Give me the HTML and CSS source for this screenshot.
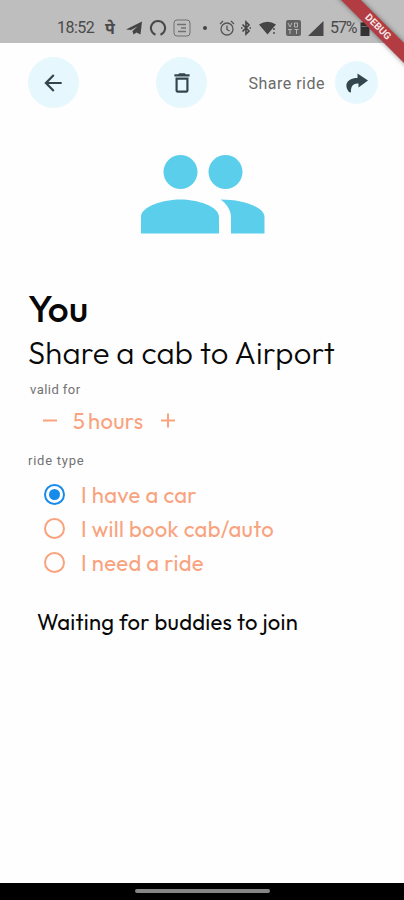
FILE: index.html
```html
<!DOCTYPE html>
<html lang="en">
<head>
<meta charset="utf-8">
<title>Share ride</title>
<link rel="stylesheet" href="styles.css">
</head>
<body>
<div class="phone">
  <header class="status">
    <span class="clock">18:52</span>
    <span class="pay">पे</span>
    <svg class="telegram" width="17" height="16" viewBox="0 0 17 16"><path d="M0 9.500 16 1.500 14.500 14.500 10.500 12.500 7.500 14.500 6.500 11 11.500 6.500 5 10z" fill="#444"/></svg>
    <svg class="ring" width="18" height="18" viewBox="0 0 18 18"><path d="M6.500 15.700A7.100 7.100 0 1 1 11.500 15.700" fill="none" stroke="#484848" stroke-width="2"/></svg>
    <svg class="note" width="18" height="18" viewBox="0 0 18 18" fill="none" stroke="#707070"><rect x="1" y="1" width="16" height="16" rx="3"/><path d="M4 5.500h3M7 5.500h6M8 9h5M5 12.500h8" stroke-width="1.300"/></svg>
    <span class="dot"></span>
    <svg class="alarm" width="16" height="17" viewBox="0 0 16 17" fill="none" stroke="#555" stroke-width="1.300"><circle cx="8" cy="9" r="6"/><path d="M1 4 4 1M15 4 12 1M8 5.500V9.500l2.500 1.500"/></svg>
    <svg class="bluetooth" width="10" height="16" viewBox="0 0 10 16" fill="none" stroke="#444" stroke-width="1.600"><path d="M1.500 4.500 8 11 5 14V2l3 3-6.500 6.500M0 8h1.500M8.500 8H10"/></svg>
    <svg class="wifi" width="18" height="16" viewBox="0 0 18 16"><path d="M0 4.500Q8.500-1 17 4.500L13.500 8.500 8.500 14.500z" fill="#444"/><path d="M15 8v2M15 12v2" stroke="#555" stroke-width="1.600"/></svg>
    <svg class="volte" width="15" height="16" viewBox="0 0 15 16"><rect width="15" height="16" rx="2" fill="#626262"/><path d="M2 3l2 4 2-4M8.500 3h3v4h-3zM2 9.500h4M4 9.500V14M8.500 9.500h4M10.500 9.500V14" stroke="#b5b5b5" fill="none"/></svg>
    <svg class="signal" width="16" height="15" viewBox="0 0 16 15"><path d="M15.500 0v15H0z" fill="#484848"/></svg>
    <span class="percent">57%</span>
    <svg class="battery" width="10" height="15" viewBox="0 0 10 15"><path d="M3 0h4v1.500h2.500V15H.5V1.500H3z" fill="#343434"/><path d="M1.500 5.500h7" stroke="#777"/></svg>
  </header>
  <div class="corner"><div class="ribbon">DEBUG</div></div>

  <nav class="toolbar">
    <button class="circle back" aria-label="Back"><svg width="26" height="26" viewBox="0 0 24 24"><path d="M20 11H7.830l5.590-5.590L12 4l-8 8 8 8 1.410-1.410L7.830 13H20v-2z"/></svg></button>
    <button class="circle" aria-label="Delete"><svg width="26" height="26" viewBox="0 0 24 24"><path d="M6 19c0 1.100.9 2 2 2h8c1.100 0 2-.9 2-2V7H6v12zM8 9h8v10H8V9zm7.500-5-1-1h-5l-1 1H5v2h14V4z"/></svg></button>
    <div class="share">
      <span>Share ride</span>
      <button class="circle small" aria-label="Share"><svg width="24" height="22" viewBox="0 0 24 22"><path d="M12.500 1.500 23 8.500 13.500 15.500v-4C9 11 5.500 13.500 6 20.500L4 20C.5 15.500.5 11 4 8.500C6.500 6.500 9.500 6 12.500 6z"/></svg></button>
    </div>
  </nav>

  <svg class="people" width="124" height="79" viewBox="0 0 124 79" fill="#5bceeb"><circle cx="39.500" cy="17" r="17"/><circle cx="84.500" cy="17" r="17"/><path d="M0 78.500V62C0 51 23 44.500 39.500 44.500S78 51 78 62v16.500zM79.500 44.500C102 44.500 123.500 52 123.500 62v16.500H90V62C90 55 85 48 79.500 44.500z"/></svg>

  <main>
    <h1>You</h1>
    <h2>Share a cab to Airport</h2>
    <p class="label valid">valid for</p>
    <div class="stepper">
      <svg width="16" height="16" viewBox="0 0 16 16"><path d="M1 7.500h14"/></svg>
      <span class="hours">5 hours</span>
      <svg width="16" height="16" viewBox="0 0 16 16"><path d="M1 7.500h14M8 .5v14"/></svg>
    </div>
    <p class="label type">ride type</p>
    <ul class="options">
      <li><i class="radio on"></i><span>I have a car</span></li>
      <li><i class="radio"></i><span>I will book cab/auto</span></li>
      <li><i class="radio"></i><span>I need a ride</span></li>
    </ul>
    <p class="waiting">Waiting for buddies to join</p>
  </main>
  <footer><span></span></footer>
</div>
</body>
</html>
```
FILE: styles.css
```css
* { box-sizing: border-box; }
body, h1, h2, p, ul { margin: 0; padding: 0; }
body { background: #fff; }
.phone {
  position: relative; width: 404px; height: 900px; overflow: hidden;
  display: flex; flex-direction: column; background: #fefefe;
  font-family: Outfit, Inter, sans-serif; color: #080808;
}
svg { display: block; flex: none; }
.status {
  flex: none; height: 43px; padding: 13px 0 0 57px; display: flex; align-items: center;
  background: #bebebe; color: #4a4a4a; white-space: nowrap;
}
.clock, .percent { font: 16px/20px Roboto, sans-serif; }
.clock { width: 37px; letter-spacing: -.5px; }
.pay { width: 12px; margin-left: 11px; font: bold 16px/20px "Noto Sans", sans-serif; }
.telegram { margin-left: 9px; }
.ring { margin-left: 6px; }
.note { margin-left: 6px; }
.dot { width: 4px; height: 4px; margin-left: 12px; border-radius: 50%; background: #444; }
.alarm { margin-left: 12px; }
.bluetooth { margin-left: 6px; }
.wifi { margin-left: 8px; }
.volte { margin-left: 9px; }
.signal { margin-left: 7px; }
.percent { width: 27px; margin-left: 6px; letter-spacing: -1.1px; }
.battery { margin-left: 3px; }
.corner { position: absolute; top: 0; right: 0; width: 80px; height: 80px; overflow: hidden; }
.ribbon {
  position: absolute; left: -6px; top: 20px; width: 120px; height: 14px; transform: rotate(45deg);
  background: #b33b42; color: #f5e5e5; text-align: center; font: bold 10px/14px Roboto, sans-serif;
  box-shadow: 0 0 5px rgba(0, 0, 0, .45);
}
.toolbar { flex: none; height: 79px; padding: 0 26px 0 28px; display: flex; align-items: center; }
.circle {
  width: 51px; height: 51px; padding: 0; border: 0; border-radius: 50%; background: #e6f7fe;
  display: flex; align-items: center; justify-content: center; fill: #34464d;
}
.back { padding-right: 2px; }
.circle + .circle { margin-left: 77px; }
.share { margin-left: auto; display: flex; align-items: center; gap: 10px; font: 16px/20px Roboto, sans-serif; letter-spacing: .5px; color: #6a6a6a; }
.share span { padding-top: 2px; }
.circle.small { width: 43px; height: 43px; }
.people { margin: 33px 0 0 141px; }
main { flex: 1; padding-left: 28px; white-space: nowrap; }
h1 { margin-top: 51px; font-size: 37px; line-height: 47px; font-weight: 500; letter-spacing: .3px; }
h2 { font-size: 31px; line-height: 42px; font-weight: 300; letter-spacing: .17px; }
.label { font: 13px/16px Roboto, sans-serif; color: #727272; letter-spacing: .45px; }
.valid { margin: 8px 0 0 2px; }
.stepper { height: 32px; margin-top: 7px; padding-left: 14px; display: flex; align-items: center; color: #f9a37e; }
.stepper svg { stroke: #f9a37e; stroke-width: 2; fill: none; }
.hours { width: 71px; margin: 0 16px 0 15px; font-size: 22px; line-height: 28px; font-weight: 450; letter-spacing: .3px; word-spacing: -2px; }
.type { margin-top: 16px; letter-spacing: .75px; }
.options { margin: 9px 0 0 16px; list-style: none; font-size: 22px; font-weight: 450; letter-spacing: .3px; color: #f9a37e; }
.options li { height: 34px; display: flex; align-items: center; gap: 16px; }
.radio { width: 21px; height: 21px; margin-bottom: 1px; border: 2px solid #f9a37e; border-radius: 50%; }
.radio.on { border-color: #168bea; padding: 3px; background: #168bea content-box; }
.waiting { margin: 27px 0 0 9px; font-size: 22px; line-height: 30px; font-weight: 450; letter-spacing: .25px; }
footer { flex: none; height: 17px; background: #000; display: flex; align-items: center; justify-content: center; }
footer span { width: 135px; height: 4px; margin-bottom: 1px; border-radius: 2px; background: #858585; }
```
